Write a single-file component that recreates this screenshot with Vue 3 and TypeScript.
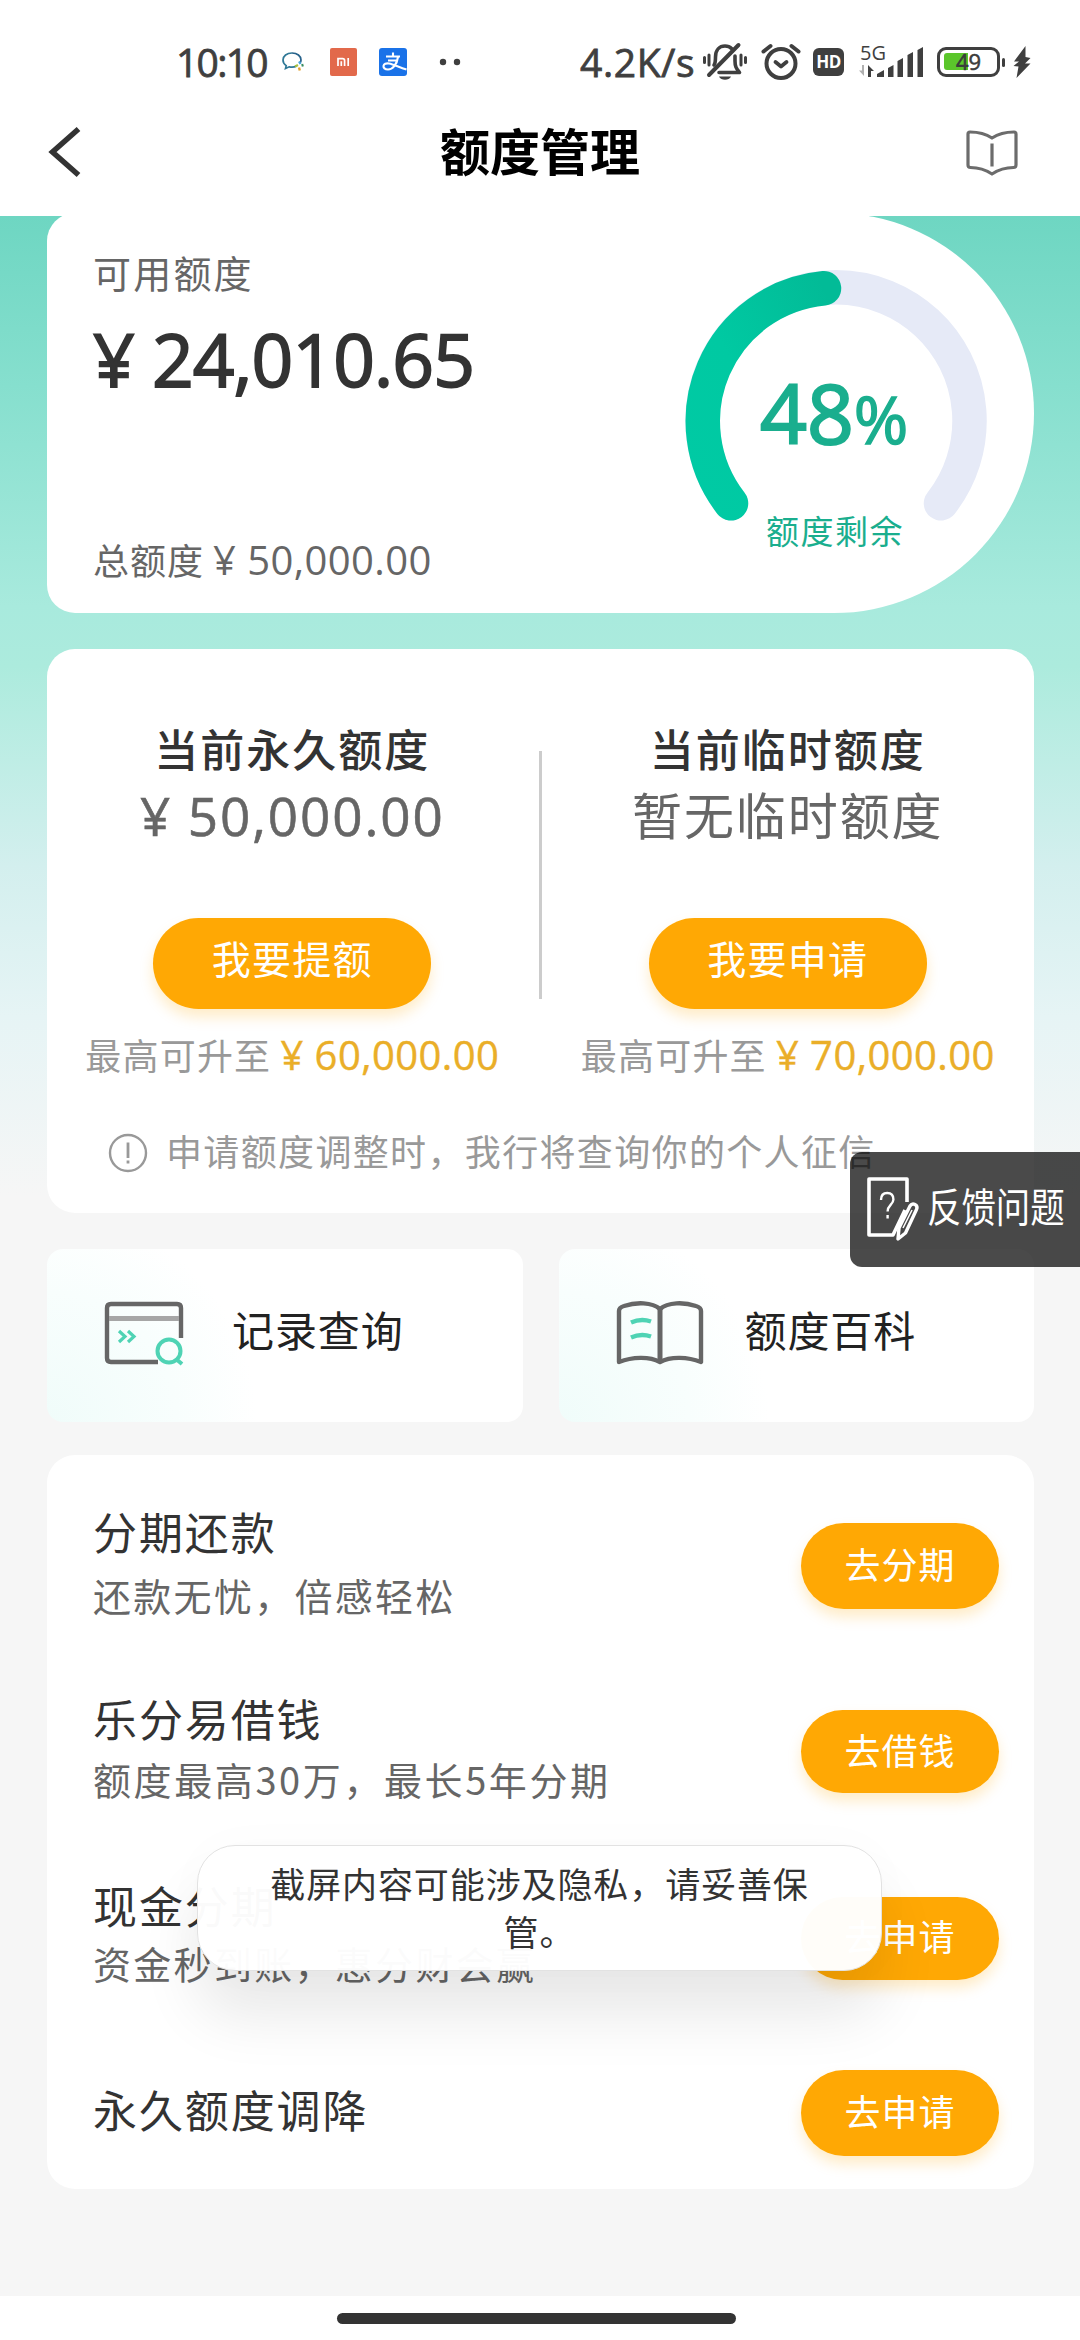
<script setup lang="ts">
interface QuotaColumn {
  title: string
  value: string
  numeric: boolean
  action: string
  limit: string
}

interface Service {
  title: string
  desc?: string
  action: string
  size: string
}

const columns: QuotaColumn[] = [
  { title: '当前永久额度', value: '¥ 50,000.00', numeric: true, action: '我要提额', limit: '¥ 60,000.00' },
  { title: '当前临时额度', value: '暂无临时额度', numeric: false, action: '我要申请', limit: '¥ 70,000.00' },
]

const services: Service[] = [
  { title: '分期还款', desc: '还款无忧，倍感轻松', action: '去分期', size: 'first' },
  { title: '乐分易借钱', desc: '额度最高30万，最长5年分期', action: '去借钱', size: 'second' },
  { title: '现金分期', desc: '资金秒到账，惠分财会赢', action: '去申请', size: 'third' },
  { title: '永久额度调降', action: '去申请', size: 'fourth' },
]
</script>

<template>
  <div class="screen">
    <div class="status">
      <span class="time">10:10</span>
      <svg class="s-chat" width="24" height="22" viewBox="0 0 24 22" fill="none">
        <path d="M11 2C5.800 2 2 5 2 9c0 2.400 1.300 4.400 3.200 5.600L4.500 17.500l3.700-1.700c1 .2 1.900.3 2.800.3 1.700 0 3.100-.3 4.300-.9" stroke="#2f7896" stroke-width="1.700" />
        <path d="M19 12c.8-1 1-2 1-3 0-4-3.800-7-9-7" stroke="#26618a" stroke-width="1.700" />
        <path d="M18 10.500l1.500 2.500" stroke="#4aa7dc" stroke-width="2.200" />
        <path d="M20.500 14.500l2-.5" stroke="#3a8d60" stroke-width="2.600" />
        <path d="M18 16.500l.8 3" stroke="#e2a02d" stroke-width="2.400" />
        <path d="M14 15.500l3-1.500" stroke="#a7bf3e" stroke-width="2.400" />
      </svg>
      <svg class="s-mi" width="27" height="28" viewBox="0 0 27 28">
        <rect width="27" height="28" rx="2" fill="#e2694b" />
        <path d="M8 18v-7.300h4.600q2 0 2 2V18M11.300 13.300V18M18.200 10V18" fill="none" stroke="#fff" stroke-width="1.700" />
      </svg>
      <svg class="s-pay" width="28" height="28" viewBox="0 0 28 28">
        <rect width="28" height="28" rx="3" fill="#1a72e8" />
        <path d="M14 4.500v4M7 8.500h14M19 9c-1 7.500-5.500 12.500-10 12.500-3.300 0-4.700-1.800-4.500-3.500.3-2 2.500-3 5.500-2.500 4.500.8 9.500 3.500 17.500 6M9 12.500h10" fill="none" stroke="#fff" stroke-width="2.100" />
      </svg>
      <svg class="s-dots" width="22" height="8" viewBox="0 0 22 8" fill="#3f3f3f">
        <circle cx="4" cy="4" r="3.200" /><circle cx="18" cy="4" r="3.200" />
      </svg>
      <span class="speed">4.2K/s</span>
      <svg class="s-bell" width="46" height="40" viewBox="0 0 46 40" fill="none" stroke="#3f3f3f">
        <path d="M12 23c1.500-2 1.500-4 1.500-8C13.500 8 17.500 4 23 4c2.800 0 5 .9 6.800 2.700M33 14v5c0 6 1.500 7.500 4.500 11.500H17" stroke-width="3.600" stroke-linecap="round" stroke-linejoin="round" />
        <path d="M36.500 3L7 33" stroke-width="4" stroke-linecap="round" />
        <path d="M17 34.500h12c-2 4.300-10 4.300-12 0z" fill="#3f3f3f" stroke="none" />
        <path d="M2.500 15.500v5M7 13v10M39 13v10M43.500 15.500v5" stroke-width="3" stroke-linecap="round" />
      </svg>
      <svg class="s-alarm" width="40" height="40" viewBox="0 0 40 40" fill="none" stroke="#3f3f3f">
        <circle cx="20" cy="21.500" r="14.500" stroke-width="4" />
        <path d="M14.500 20l5.500 4.500 5.500-4.500" stroke-width="3.800" stroke-linecap="round" stroke-linejoin="round" />
        <path d="M2.500 9.500L9.500 4M37.500 9.500L30.500 4" stroke-width="4" stroke-linecap="round" />
      </svg>
      <span class="hd">HD</span>
      <div class="signal">
        <span class="five-g">5G</span>
        <svg width="66" height="36" viewBox="0 0 66 36" fill="#3f3f3f">
          <path d="M5 21v11L0 26.500h3V21z" fill="#b0b0b0" />
          <path d="M9 21l6 6h-3v6H9z" />
          <path d="M18 30l7-4v7h-7zM29 24l5.500-3v12H29zM38.500 17l5.500-3v19h-5.500zM48.500 11l5.500-3v25h-5.500zM58.500 6l5.500-3v30h-5.500z" />
        </svg>
      </div>
      <div class="battery"><div class="charge"></div><span>49</span></div>
      <i class="nub"></i>
      <svg class="s-bolt" width="18" height="32" viewBox="0 0 18 32"><path d="M12.500 0L1 15.500h5L0.500 20l5 .5L3.500 32 17.500 17.500H12L17.500 12l-5-1z" fill="#3f3f3f" /></svg>
    </div>

    <header class="header">
      <svg class="back" width="36" height="52" viewBox="0 0 36 52" fill="none" stroke="#333" stroke-width="5.500"><path d="M32.500 3L6.500 26l26 23" /></svg>
      <h1>额度管理</h1>
      <svg class="guide" width="52" height="48" viewBox="0 0 52 48" fill="none" stroke="#6c6c6c" stroke-width="3.200" stroke-linejoin="round">
        <path d="M26 9C20 5 12 3 4 3Q2 3 2 5V36Q2 38.500 4.500 38.500C13 38.500 20 41 26 45C32 41 39 38.500 47.500 38.500Q50 38.500 50 36V5Q50 3 48 3C40 3 32 5 26 9Z" />
        <path d="M26 14.500V37.500" />
      </svg>
    </header>

    <main class="page">
      <section class="hero">
        <div class="hero-text">
          <p class="label">可用额度</p>
          <p class="amount">¥ 24,010.65</p>
          <p class="total">总额度 <span class="num">¥ 50,000.00</span></p>
        </div>
        <svg class="gauge" width="320" height="400" viewBox="0 0 320 400" fill="none">
          <defs>
            <linearGradient id="arc" x1="0" y1="1" x2="1" y2="0">
              <stop offset="0" stop-color="#00caa4" /><stop offset=".45" stop-color="#00c9a2" /><stop offset="1" stop-color="#02bb97" />
            </linearGradient>
          </defs>
          <path d="M51 290.300A133.500 133.500 0 1 1 261 290.300" stroke="#e6eaf7" stroke-width="34.500" stroke-linecap="round" />
          <path d="M51 290.300A133.500 133.500 0 0 1 144 75.300" stroke="url(#arc)" stroke-width="34.500" stroke-linecap="round" />
          <text class="pct" x="80" y="231">48<tspan class="sign">%</tspan></text>
          <text class="left" x="86" y="331">额度剩余</text>
        </svg>
      </section>

      <section class="quota">
        <div class="cols">
          <div v-for="c in columns" :key="c.title" class="col">
            <h2>{{ c.title }}</h2>
            <p :class="['value', { digits: c.numeric }]">{{ c.value }}</p>
            <button class="pill">{{ c.action }}</button>
            <p class="limit">最高可升至 <span class="num">{{ c.limit }}</span></p>
          </div>
        </div>
        <div class="notice">
          <svg width="40" height="40" viewBox="0 0 40 40" fill="none" stroke="#999" stroke-width="2.400">
            <circle cx="20" cy="20" r="18" /><path d="M20 9.500v15.500M20 27.500v3" stroke-width="2.800" />
          </svg>
          <span>申请额度调整时，我行将查询你的个人征信</span>
        </div>
      </section>

      <section class="quick">
        <div class="entry">
          <svg width="82" height="68" viewBox="0 0 82 68" fill="none">
            <path d="M77 38V8Q77 4 73 4H7Q3 4 3 8V58Q3 62 7 62H54" stroke="#666" stroke-width="4.400" />
            <path d="M5 18.500H75" stroke="#a6a6a6" stroke-width="5" />
            <path d="M15 31l6 5.500-6 5.500M24 31l6 5.500-6 5.500" stroke="#4fd3b4" stroke-width="3.200" />
            <circle cx="65" cy="51" r="11.500" stroke="#4fd3b4" stroke-width="4" /><path d="M72 59l6 5" stroke="#4fd3b4" stroke-width="4" />
          </svg>
          <span>记录查询</span>
        </div>
        <div class="entry">
          <svg width="88" height="68" viewBox="0 0 88 68" fill="none">
            <path d="M44 9C36 2 20 2 8 6Q3 7.500 3 11V62C16 57 33 56 44 62C55 56 72 57 85 62V11Q85 7.500 80 6C68 2 52 2 44 9Z" stroke="#666" stroke-width="4.400" stroke-linejoin="round" />
            <path d="M44 9V62" stroke="#666" stroke-width="5" />
            <path d="M15 22.500Q25 18 35 21.500M15 37.500Q25 33 35 36.500" stroke="#4fd3b4" stroke-width="4.400" />
          </svg>
          <span>额度百科</span>
        </div>
      </section>

      <section class="services">
        <div v-for="s in services" :key="s.title" :class="['service', s.size]">
          <div class="service-text">
            <h3>{{ s.title }}</h3>
            <p v-if="s.desc">{{ s.desc }}</p>
          </div>
          <button class="go">{{ s.action }}</button>
        </div>
      </section>
    </main>

    <footer class="nav"><i></i></footer>

    <aside class="feedback">
      <svg width="58" height="72" viewBox="0 0 58 72" fill="none" stroke="#fff">
        <path d="M41 26V3H3V59H27L39 34" stroke-width="3.600" stroke-linejoin="round" />
        <path d="M15 24q0-7 6.200-7t6.200 6.500c0 5-5.800 5.500-5.800 12M21.600 39v3.500" stroke-width="2.400" />
        <path d="M33 52L44 30q2-3 5-1.500t1.500 5L39.500 57L32 63z" stroke-width="3.400" stroke-linejoin="round" />
        <path d="M37 52L46 34" stroke-width="1.600" />
      </svg>
      <span>反馈问题</span>
    </aside>

    <div class="toast">截屏内容可能涉及隐私，请妥善保管。</div>
  </div>
</template>

<style>
body {
  margin: 0;
  background: #fff;
}
</style>

<style scoped>
.screen {
  position: relative;
  width: 1080px;
  height: 2340px;
  overflow: hidden;
  background: #fff;
  font-family: "Noto Sans CJK SC", "Noto Sans", sans-serif;
  color: #333;
}
h1, h2, h3, p {
  margin: 0;
  font-weight: 400;
}
svg {
  display: block;
  flex: none;
}
button {
  display: block;
  border: 0;
  padding: 0;
  font-family: inherit;
  color: #fff;
  background: #ffa804;
}
.num, .amount, .digits, .time, .speed, .five-g, .battery span {
  font-family: "Open Sans", "Noto Sans", sans-serif;
}

/* system bar */
.status {
  box-sizing: border-box;
  height: 84px;
  padding: 40px 0 0 176px;
  display: flex;
  align-items: center;
  color: #3f3f3f;
  white-space: nowrap;
}
.time, .speed {
  flex: none;
  font-size: 39px;
  line-height: 44px;
  -webkit-text-stroke: 0.8px #3f3f3f;
}
.time {
  width: 105px;
  letter-spacing: -1.7px;
}
.s-mi { margin-left: 25px; }
.s-pay { margin-left: 22px; }
.s-dots { margin-left: 32px; }
.speed {
  width: 122px;
  margin-left: 119px;
  letter-spacing: 0.6px;
}
.s-alarm { margin-left: 13px; }
.hd {
  width: 31px;
  height: 28px;
  margin-left: 12px;
  border-radius: 6px;
  background: #3f3f3f;
  color: #fff;
  font: 700 17px/28px "Open Sans", sans-serif;
  text-align: center;
  letter-spacing: -0.5px;
}
.signal {
  position: relative;
  margin-left: 15px;
}
.five-g {
  position: absolute;
  left: 1px;
  top: -2px;
  font-size: 20px;
  line-height: 22px;
}
.battery {
  position: relative;
  box-sizing: border-box;
  width: 63px;
  height: 30px;
  margin-left: 12px;
  padding: 3px 4px;
  border: 3.5px solid #3f3f3f;
  border-radius: 9px;
}
.charge {
  width: 24px;
  height: 17px;
  border-radius: 3px 0 0 3px;
  background: #5bc62b;
}
.battery span {
  position: absolute;
  inset: 0;
  text-align: center;
  font-size: 22px;
  line-height: 23px;
  -webkit-text-stroke: 0.5px #333;
}
.nub {
  width: 3px;
  height: 9px;
  margin-left: 2px;
  border-radius: 2px;
  background: #3f3f3f;
}
.s-bolt { margin-left: 8px; }

/* title bar */
.header {
  box-sizing: border-box;
  height: 132px;
  padding: 0 62px 1px 46px;
  display: flex;
  align-items: center;
  justify-content: space-between;
}
.back { margin-top: 5px; }
.guide { margin-top: 6px; }
.header h1 {
  margin: -2px 0 0 32px;
  font-size: 50px;
  line-height: 60px;
  font-weight: 700;
  color: #000;
}

.page {
  box-sizing: border-box;
  height: 2080px;
  padding: 0 46px 0 47px;
  overflow: hidden;
  background: #f6f6f6 linear-gradient(#6ed6c2 0, #86dfce 170px, #a8eadd 390px, #acebdd 450px, #d3efee 650px, #e6f4f5 800px, #f6f6f6 980px) no-repeat;
}

/* available quota */
.hero {
  display: flex;
  justify-content: space-between;
  height: 400px;
  margin-top: -3px;
  border-radius: 28px 200px 200px 28px;
  background: #fff;
}
.hero-text {
  padding: 35px 0 0 46px;
  white-space: nowrap;
}
.label {
  font-size: 38px;
  line-height: 48px;
  letter-spacing: 2.2px;
  color: #666;
}
.amount {
  margin-top: 23px;
  font-size: 73px;
  line-height: 80px;
  letter-spacing: -0.9px;
  -webkit-text-stroke: 1.8px #333;
}
.total {
  margin-top: 136px;
  font-size: 36px;
  line-height: 48px;
  letter-spacing: 1px;
  color: #666;
}
.total .num, .limit .num {
  font-size: 40px;
  line-height: 1;
  letter-spacing: 0.4px;
}
.gauge { margin-right: 34px; }
.pct {
  font: 400 82px "Open Sans", sans-serif;
  fill: #1aae8e;
  stroke: #1aae8e;
  stroke-width: 2.2px;
}
.sign { font-size: 66px; stroke-width: 1.4px; }
.left {
  font-size: 33px;
  letter-spacing: 1.5px;
  fill: #1aae8e;
}

/* permanent and temporary quota */
.quota {
  height: 564px;
  margin-top: 36px;
  border-radius: 28px;
  background: #fff;
}
.cols {
  display: grid;
  grid-template-columns: 1fr 1fr;
  background: linear-gradient(#ccc, #ccc) 492px 102px / 3px 248px no-repeat;
}
.col {
  display: flex;
  flex-direction: column;
  align-items: center;
  padding: 71px 3px 0 0;
  white-space: nowrap;
}
.col + .col { padding: 71px 0 0 1px; }
.col h2 {
  font-size: 44px;
  line-height: 56px;
  font-weight: 500;
  letter-spacing: 2px;
}
.value {
  height: 68px;
  margin-top: 5px;
  font-size: 50px;
  line-height: 64px;
  letter-spacing: 1.9px;
  color: #666;
}
.value.digits {
  font-size: 53px;
  line-height: 69px;
  -webkit-text-stroke: 0.6px #666;
}
.pill {
  width: 278px;
  height: 91px;
  margin-top: 69px;
  padding-bottom: 14px;
  border-radius: 46px;
  font-size: 39px;
  letter-spacing: 1.3px;
  box-shadow: 0 8px 14px rgba(255, 168, 4, 0.22);
}
.limit {
  margin-top: 21px;
  font-size: 36px;
  line-height: 48px;
  letter-spacing: 1.2px;
  color: #999;
}
.limit .num {
  color: #eaae28;
  -webkit-text-stroke: 0.4px #eaae28;
}
.notice {
  display: flex;
  align-items: center;
  gap: 18px;
  margin: 48px 0 0 61px;
  font-size: 36px;
  line-height: 48px;
  letter-spacing: 1.35px;
  color: #999;
  white-space: nowrap;
}
.notice svg { margin-top: 5px; }

/* shortcuts */
.quick {
  display: grid;
  grid-template-columns: 1fr 1fr;
  gap: 36px;
  margin-top: 36px;
}
.entry {
  box-sizing: border-box;
  height: 173px;
  padding: 0 0 3px 57px;
  display: flex;
  align-items: center;
  gap: 46px;
  border-radius: 16px;
  font-size: 42px;
  letter-spacing: 0.9px;
  color: #222;
  background: radial-gradient(circle at 0 100%, #f0fcfa 0, #f8fefd 130px, #fff 210px);
}
.entry span { margin-top: -11px; }
.entry + .entry { gap: 41px; }

/* service list */
.services {
  height: 734px;
  margin-top: 33px;
  border-radius: 28px;
  background: #fff;
}
.service {
  display: flex;
  justify-content: space-between;
  align-items: flex-start;
  box-sizing: border-box;
  height: 187px;
  padding: 46px 35px 0 46px;
  white-space: nowrap;
}
.service h3 {
  font-size: 44px;
  line-height: 60px;
  letter-spacing: 1.9px;
}
.service p {
  margin-top: 6px;
  font-size: 38px;
  line-height: 56px;
  letter-spacing: 2.3px;
  color: #666;
}
.second p {
  margin-top: 3px;
  letter-spacing: 2.6px;
}
.third p { margin-top: 0; }
.go {
  width: 198px;
  height: 86px;
  margin-top: 22px;
  padding-bottom: 6px;
  border-radius: 43px;
  font-size: 36px;
  letter-spacing: 1px;
  box-shadow: 0 8px 14px rgba(255, 168, 4, 0.22);
}
.second .go, .third .go {
  height: 83px;
}
.third .go { padding-bottom: 8px; }
.fourth { padding-top: 63px; }
.fourth .go { margin-top: -9px; }

.nav {
  height: 44px;
  display: flex;
  justify-content: center;
}
.nav i {
  width: 399px;
  height: 11px;
  margin: 17px 7px 0 0;
  border-radius: 6px;
  background: #333;
}

.feedback {
  position: absolute;
  box-sizing: border-box;
  left: 850px;
  top: 1152px;
  width: 230px;
  height: 115px;
  padding-left: 16px;
  display: flex;
  align-items: center;
  border-radius: 12px 0 0 12px;
  background: rgba(0, 0, 0, 0.71);
  color: #fff;
}
.feedback svg { margin-top: 4px; }
.feedback span {
  margin: -9px 0 0 3px;
  font-size: 40px;
  white-space: nowrap;
  transform: scaleX(0.86);
  transform-origin: 0 50%;
}

.toast {
  position: absolute;
  box-sizing: border-box;
  left: 197px;
  top: 1845px;
  width: 685px;
  height: 126px;
  padding: 13px 68px 0;
  border: 1px solid #e2e2e2;
  border-radius: 38px;
  background: rgba(255, 255, 255, 0.975);
  box-shadow: 0 45px 60px rgba(0, 0, 0, 0.09), 0 0 50px rgba(0, 0, 0, 0.02);
  text-align: center;
  font-size: 35px;
  line-height: 48px;
  letter-spacing: 0.9px;
}
</style>
